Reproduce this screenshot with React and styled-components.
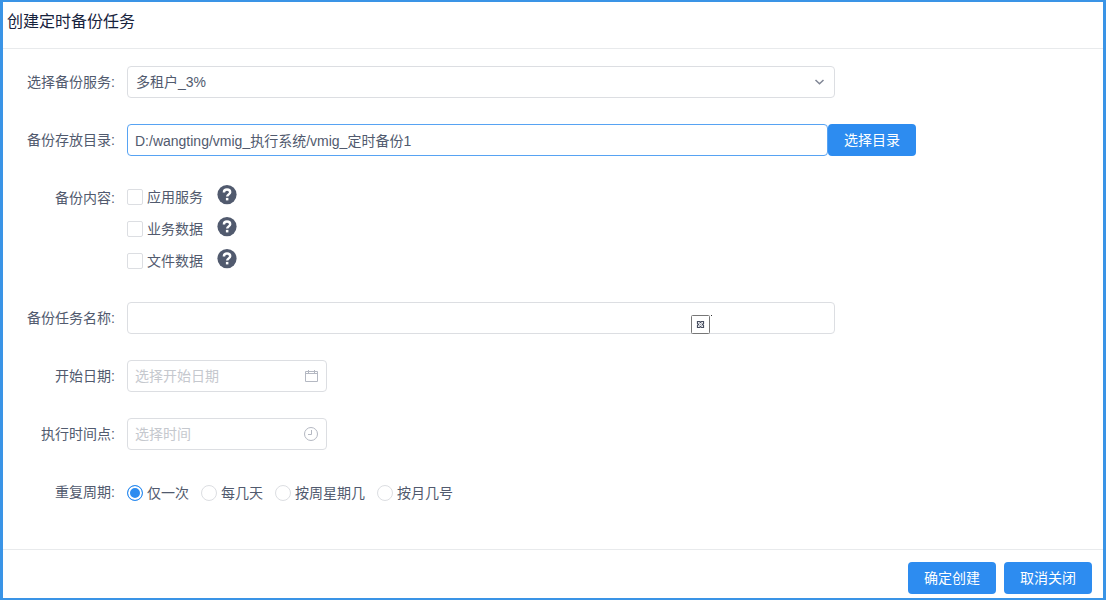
import React, { useState } from 'react';
import styled, { createGlobalStyle } from 'styled-components';

const GlobalStyle = createGlobalStyle`
  * {
    box-sizing: border-box;
  }
  body {
    margin: 0;
    background: #fff;
  }
  body, input, select, button {
    font-family: "Liberation Sans", "Noto Sans CJK SC", sans-serif;
    font-size: 14px;
    color: #515a6e;
  }
`

const Dialog = styled.div`
  display: flex;
  flex-direction: column;
  min-height: 100vh;
  border: solid #3a94e6;
  border-width: 2px 3px;
`

const Header = styled.header`
  padding: 8px 4px 14px;
  border-bottom: 1px solid #e8eaec;
`

const Title = styled.h1`
  margin: 0;
  font-size: 16px;
  font-weight: normal;
  line-height: 24px;
  color: #17233d;
`

const Form = styled.form`
  flex: 1;
  display: flex;
  flex-direction: column;
  gap: 24px;
  padding: 17px 16px 24px 0;
`

const Row = styled.div`
  display: flex;
  align-items: flex-start;
  gap: 12px;
  min-height: 34px;
`

const Label = styled.label`
  flex: 0 0 112px;
  line-height: 32px;
  text-align: right;
`

const Control = styled.div`
  position: relative;
  flex: 0 1 ${props => props.$width || '708px'};
  display: flex;
`

const Input = styled.input`
  flex: 1;
  min-width: 0;
  height: 32px;
  padding: 0 7px;
  background: #fff;
  border: 1px solid ${props => (props.$active ? '#57a3f3' : '#dcdee2')};
  border-radius: 4px;
  outline: none;
  &:focus {
    border-color: #57a3f3;
  }
  &::placeholder {
    color: #c5c8ce;
  }
`

const Select = styled.select`
  flex: 1;
  min-width: 0;
  height: 32px;
  padding: 0 24px 0 8px;
  background: #fff;
  border: 1px solid #dcdee2;
  border-radius: 4px;
  appearance: none;
  outline: none;
`

const Suffix = styled.svg`
  position: absolute;
  top: 8px;
  right: 8px;
  width: 16px;
  height: 16px;
  fill: none;
  stroke: ${props => props.$color || '#b4b8c2'};
  pointer-events: none;
`

const FillBadge = styled.svg`
  position: absolute;
  top: 12px;
  right: 122px;
  width: 23px;
  height: 21px;
`

const Button = styled.button`
  height: 32px;
  padding: 0 16px 2px;
  color: #fff;
  background: #2d8cf0;
  border: 0;
  border-radius: 4px;
  cursor: pointer;
`

const CheckList = styled.div`
  display: flex;
  flex-direction: column;
`

const CheckRow = styled.div`
  display: flex;
  align-items: flex-start;
  gap: 14px;
  height: 32px;
  padding-top: 3px;
`

const RadioList = styled.div`
  display: flex;
  flex-wrap: wrap;
  gap: 12px;
  padding-top: 5px;
`

const Option = styled.label`
  display: flex;
  align-items: center;
  gap: 4px;
  line-height: 24px;
  cursor: pointer;
`

const Box = styled.input`
  appearance: none;
  width: 16px;
  height: 16px;
  margin: 0;
  background: #fff;
  border: 1px solid #dcdee2;
  border-radius: ${props => (props.type === 'radio' ? '50%' : '2px')};
  &:checked {
    border-color: #2d8cf0;
    background: #2d8cf0;
    box-shadow: inset 0 0 0 2px #fff;
  }
`

const HelpButton = styled.button`
  display: flex;
  padding: 0;
  background: none;
  border: 0;
  cursor: pointer;
`

const Footer = styled.footer`
  display: flex;
  justify-content: flex-end;
  gap: 8px;
  padding: 12px 11px 4px;
  border-top: 1px solid #e8eaec;
`

const HelpIcon = () => (
  <svg width="20" height="20" viewBox="0 0 20 20">
    <circle cx="10" cy="9.6" r="9.6" fill="#515a6e" />
    <path d="M6.900 7.500C6.900 5.500 8.200 4.500 10 4.500s3.200 1 3.200 2.700c0 2.100-3 2.200-3 4.400" fill="none" stroke="#fff" strokeWidth="2.400" />
    <rect x="8.900" y="12.900" width="2.500" height="2.500" fill="#fff" />
  </svg>
)

const contents = [
  { id: 'app', name: '应用服务' },
  { id: 'business', name: '业务数据' },
  { id: 'file', name: '文件数据' },
]

const cycles = [
  { id: 'once', name: '仅一次' },
  { id: 'days', name: '每几天' },
  { id: 'week', name: '按周星期几' },
  { id: 'month', name: '按月几号' },
]

const App = () => {
  const [path, setPath] = useState('D:/wangting/vmig_执行系统/vmig_定时备份1')
  const [cycle, setCycle] = useState('once')

  return (
    <Dialog>
      <GlobalStyle />
      <Header>
        <Title>创建定时备份任务</Title>
      </Header>
      <Form id="backup" onSubmit={e => e.preventDefault()}>
        <Row>
          <Label htmlFor="service">选择备份服务:</Label>
          <Control>
            <Select id="service">
              <option>多租户_3%</option>
            </Select>
            <Suffix $color="#808695" viewBox="0 0 16 16">
              <path d="M4.500 6l4 3.800 4-3.800" strokeWidth="1.500" />
            </Suffix>
          </Control>
        </Row>
        <Row>
          <Label htmlFor="path">备份存放目录:</Label>
          <Control $width="789px">
            <Input id="path" $active value={path} onChange={e => setPath(e.target.value)} />
            <Button type="button">选择目录</Button>
          </Control>
        </Row>
        <Row role="group" aria-labelledby="content-label">
          <Label as="span" id="content-label">备份内容:</Label>
          <CheckList>
            {contents.map(item => (
              <CheckRow key={item.id}>
                <Option>
                  <Box type="checkbox" name={item.id} />
                  {item.name}
                </Option>
                <HelpButton type="button" aria-label={item.name}>
                  <HelpIcon />
                </HelpButton>
              </CheckRow>
            ))}
          </CheckList>
        </Row>
        <Row>
          <Label htmlFor="name">备份任务名称:</Label>
          <Control>
            <Input id="name" />
            <FillBadge viewBox="0 0 23 21">
              <rect x="1.5" y="1.5" width="18" height="18" rx="1" fill="#fff" stroke="#777" />
              <path d="M7.500 7.500h2l1 1 1-1h2v2l-1 1 1 1v2h-2l-1-1-1 1h-2v-2l1-1-1-1z" fill="none" stroke="#454c5e" strokeWidth="1.200" />
              <path d="M9 9l3 3M12 9l-3 3" stroke="#8a90a0" strokeWidth=".6" />
              <rect x="21" y="1" width="1" height="1" fill="#333" />
            </FillBadge>
          </Control>
        </Row>
        <Row>
          <Label htmlFor="date">开始日期:</Label>
          <Control $width="200px">
            <Input id="date" placeholder="选择开始日期" />
            <Suffix viewBox="0 0 16 16">
              <path d="M2.500 3.500h12v10h-12zM2.500 5.500h12M5.500 2v3M11.500 2v3" />
            </Suffix>
          </Control>
        </Row>
        <Row>
          <Label htmlFor="time">执行时间点:</Label>
          <Control $width="200px">
            <Input id="time" placeholder="选择时间" />
            <Suffix viewBox="0 0 16 16">
              <circle cx="8" cy="8" r="6.500" />
              <path d="M8.500 4v4.500H5" />
            </Suffix>
          </Control>
        </Row>
        <Row role="radiogroup" aria-labelledby="cycle-label">
          <Label as="span" id="cycle-label">重复周期:</Label>
          <RadioList>
            {cycles.map(item => (
              <Option key={item.id}>
                <Box
                  type="radio"
                  name="cycle"
                  checked={cycle === item.id}
                  onChange={() => setCycle(item.id)}
                />
                {item.name}
              </Option>
            ))}
          </RadioList>
        </Row>
      </Form>
      <Footer>
        <Button type="submit" form="backup">确定创建</Button>
        <Button type="button">取消关闭</Button>
      </Footer>
    </Dialog>
  );
}

export default App;
